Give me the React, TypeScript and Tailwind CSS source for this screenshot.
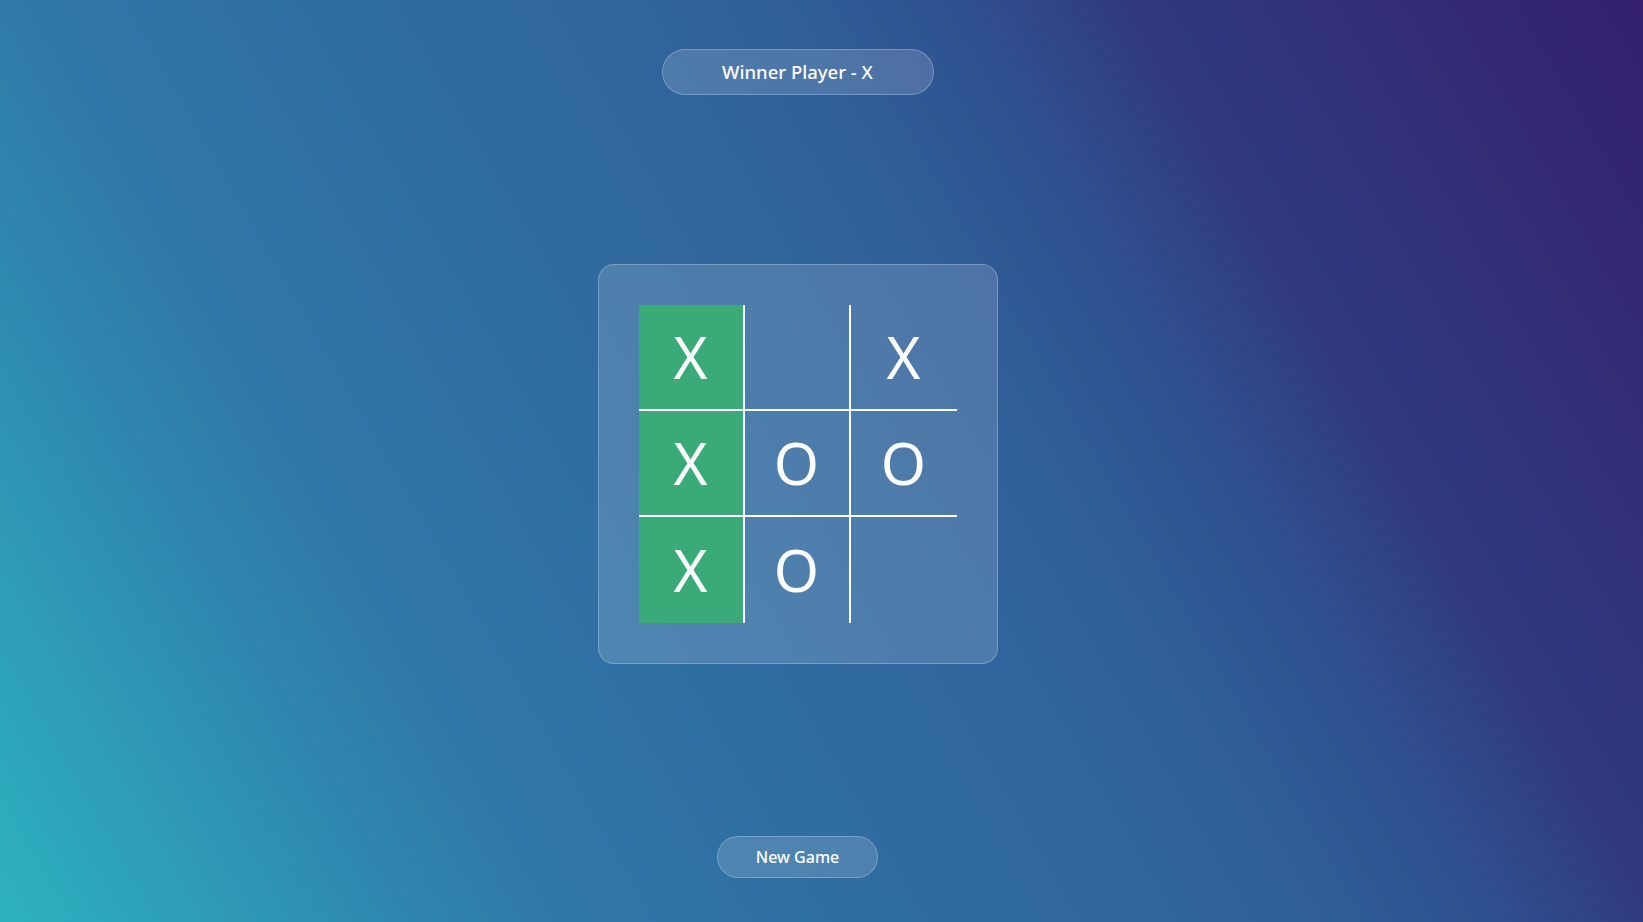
const board = ["X", "", "X", "X", "O", "O", "X", "O", ""];
const winLine = [0, 3, 6];

export default function App() {
  return (
    <div
      className="h-[922px] w-full overflow-hidden bg-[linear-gradient(60deg,#2db2c0_0%,#2f78a8_25%,#2f5f99_60%,#2f4f8f_69%,#303a80_76%,#34206c_100%)] text-white"
      style={{ fontFamily: '"Noto Sans", "Open Sans", sans-serif' }}
    >
      <div className="flex flex-col items-center pr-[48px]">
        <div className="mt-[49px] flex h-[46px] w-[272px] items-center justify-center rounded-full border border-white/25 bg-white/15 text-[18.5px] font-medium">
          Winner Player - X
        </div>

        <div className="mt-[169px] flex h-[400px] w-[400px] items-center justify-center rounded-2xl border border-white/25 bg-white/15">
          <div className="grid w-[318px] grid-cols-3">
            {board.map((v, i) => {
              const col = i % 3;
              const row = Math.floor(i / 3);
              return (
                <div
                  key={i}
                  className={[
                    "flex h-[106px] items-center justify-center border-white text-[58px] leading-none",
                    col < 2 ? "border-r-2" : "",
                    row < 2 ? "border-b-2" : "",
                    winLine.includes(i) ? "bg-[#3aab78]" : "",
                  ].join(" ")}
                >
                  {v}
                </div>
              );
            })}
          </div>
        </div>

        <button className="mt-[172px] h-[42px] w-[161px] rounded-full border border-white/25 bg-white/15 text-[16px] font-medium text-white">
          New Game
        </button>
      </div>
    </div>
  );
}
